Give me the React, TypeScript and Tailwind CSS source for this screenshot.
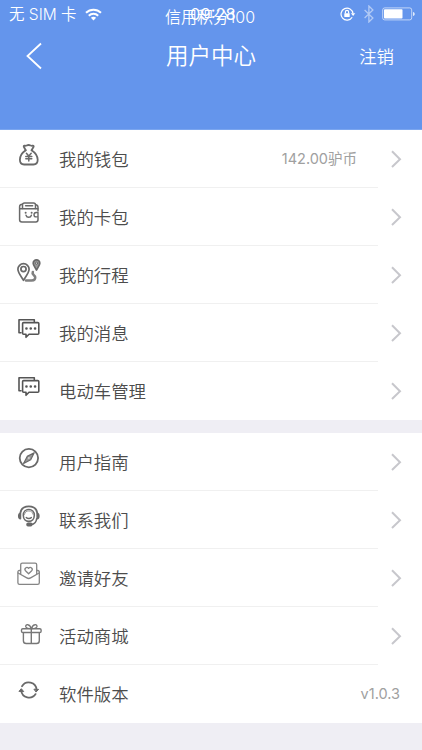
import type { ReactNode } from "react";

type MenuItem = {
  label: string;
  icon: ReactNode;
  value?: string;
  arrow?: boolean;
};

const iconProps = {
  width: 26,
  height: 26,
  viewBox: "0 0 26 26",
  fill: "none",
  stroke: "#696969",
  strokeWidth: 1.8,
  strokeLinecap: "round",
  strokeLinejoin: "round",
} as const;

function WalletIcon() {
  return (
    <svg {...iconProps}>
      <path d="M8.7 7.2 6.8 3.8C6.4 2.8 7.2 2.3 8.2 2.7c1 .4 1.6-.7 3.4-.7s2.6 1.1 3.6.7 1.8.1 1.4 1.1l-2 3.4" />
      <path d="M8.7 7.2C6 9 2.9 12.800 2.900 16.800c0 3.200 1.600 4.700 4.200 4.700h9.400c2.600 0 4.200-1.500 4.200-4.700 0-4-3.400-7.800-6.100-9.600" />
      <path d="m9.400 10.200 2.400 2.800 2.400-2.800M8.800 13.500h6M8.800 15.700h6M11.800 13v5" strokeWidth={1.5} />
    </svg>
  );
}

function CardIcon() {
  return (
    <svg {...iconProps} strokeWidth={1.5}>
      <path d="M21 10V6.500c0-1.600-.8-2.700-2.300-2.700M5.300 3.200c-1.600 0-2.700.9-2.700 2.500v13.100c0 1.400.8 2.200 2.200 2.200h14c1.400 0 2.200-.8 2.200-2.200v-2" />
      <path d="M2.800 7.800h18" />
      <path d="M5.500 7.600V4c0-1.300.7-2 2-2h9c1.300 0 2 .7 2 2v3.600M8.600 4.700h7" />
      <path d="M21 11.500h-1.800a2.200 2.200 0 0 0 0 4.400H21ZM9 14.200c.8 2.700 4.600 2.700 5.400 0" strokeWidth={1.400} />
      <path d="M8.600 11.700h.1M14.600 11.700h.1" strokeWidth={1.900} />
    </svg>
  );
}

function TripIcon() {
  return (
    <svg {...iconProps} strokeWidth={1.7}>
      <path d="M6.500 21.300C4 17.300.9 13.500.9 10.300a5.600 5.600 0 0 1 11.200 0c0 3.200-3.100 7-5.600 11Z" />
      <circle cx="6.500" cy="10.100" r="2.600" />
      <path d="M19.500 11c-1.600-2.800-3.300-4.700-3.300-6.800a3.300 3.300 0 0 1 6.600 0c0 2.100-1.700 4-3.300 6.800Z" fill="#999" />
      <circle cx="19.500" cy="4.200" r="1.100" fill="#ddd" strokeWidth={1} />
      <path d="M9 21.500h5.500c3 0 4.300-1.900 3.500-3.900-.7-1.700-3.300-2.300-2.200-4.600" strokeWidth={2.600} stroke="#808080" />
    </svg>
  );
}

function MessageIcon() {
  return (
    <svg {...iconProps} stroke="#555" strokeWidth={1.600}>
      <path d="M4 15.800H2V2.800h15.300v1.700" />
      <path d="M6.600 5.600h14.200c.6 0 1 .4 1 1v9.700c0 .6-.4 1-1 1H12l-3 3v-3H6.600c-.6 0-1-.4-1-1V6.600c0-.6.4-1 1-1Z" />
      <path d="M9.400 11.500h.1M13.700 11.500h.1M18 11.500h.1" strokeWidth={2.500} />
    </svg>
  );
}

function CompassIcon() {
  return (
    <svg {...iconProps}>
      <circle cx="11.900" cy="12.100" r="9.200" />
      <path d="m17.200 6.700-3.500 7-7.100 3.800 3.600-7.100Z" fill="#999" strokeWidth={1.200} />
      <circle cx="11.900" cy="12" r=".8" fill="#fff" stroke="none" />
    </svg>
  );
}

function SupportIcon() {
  return (
    <svg {...iconProps} strokeWidth={1.500}>
      <path d="M3.300 9C4 4.700 7.400 2.300 11.800 2.300s7.800 2.400 8.500 6.700" strokeWidth={1.800} />
      <path d="M3.500 9.400C2.200 9.400 1.700 10.300 1.700 12s.6 2.700 1.800 2.700ZM20.100 9.400c1.300 0 1.800.9 1.800 2.600s-.6 2.700-1.800 2.700Z" fill="#696969" />
      <path d="M17.300 11.300c0 3.500-2.300 6.100-5.500 6.100s-5.500-2.600-5.500-6.100 2.300-5.800 5.500-5.800 5.500 2.300 5.500 5.800Z" strokeWidth={1.600} />
      <path d="M7.400 10.500c.8-2.700 2-3.500 4.400-3.500s3.600.8 4.400 3.500" strokeWidth={1} stroke="#999" />
      <path d="M9.200 13.500c1.200 1.300 4 1.300 5.200 0" strokeWidth={1.300} />
      <path d="M19.700 14.700c-.5 3.900-2.600 5.700-5.500 5.900" />
      <rect x="10" y="19.300" width="4.800" height="2.500" rx="1" fill="#696969" />
    </svg>
  );
}

function InviteIcon() {
  return (
    <svg {...iconProps} stroke="#858585" strokeWidth={1.300}>
      <path d="M3.700 11.800V2.800c0-1 .6-1.600 1.600-1.600h12.800c1 0 1.600.6 1.600 1.600v9" />
      <path d="M3.500 8.500H2.400c-1 0-1.500.6-1.500 1.500v10.700c0 1 .6 1.700 1.700 1.700h18c1.100 0 1.700-.7 1.700-1.700V10c0-.9-.5-1.500-1.500-1.500h-1.100" />
      <path d="m1.100 11 8.700 4.900c1.300.8 2.500.8 3.800 0l8.500-4.900" />
      <path d="M11.600 11.800 8.500 8.700C6.800 6.700 9.600 4 11.600 6.300c2-2.300 4.800.4 3.100 2.400Z" />
    </svg>
  );
}

function GiftIcon() {
  return (
    <svg {...iconProps} stroke="#777" strokeWidth={1.400}>
      <rect x="4.500" y="8.800" width="19.600" height="3.700" rx="1.300" />
      <path d="M6.400 12.700v8c0 1.900.9 2.800 2.800 2.800h10.300c1.900 0 2.800-.9 2.800-2.800v-8M14.300 8.800v14.500" />
      <path d="M14 8.600c-1.800 0-4.400-.3-5.100-1.600-.6-1.300.5-2.700 2-2.300 1.600.3 2.800 2 3.100 3.900ZM14.700 8.600c1.800 0 4.400-.3 5.100-1.600.6-1.300-.5-2.700-2-2.300-1.600.3-2.800 2-3.100 3.900Z" />
    </svg>
  );
}

function RefreshIcon() {
  return (
    <svg {...iconProps} strokeWidth={1.800}>
      <path d="M5 8.200a7.900 7.900 0 0 1 14.600 3.600M18.600 16.100A7.900 7.900 0 0 1 4.200 12.700" />
      <path d="m17.300 11.200 4.300.2-2.300 2.400ZM2.200 13.100l2.100-2.400 2.200 2.600Z" fill="#696969" strokeWidth={1} />
    </svg>
  );
}

const accountItems: MenuItem[] = [
  { label: "我的钱包", icon: <WalletIcon />, value: "142.00驴币", arrow: true },
  { label: "我的卡包", icon: <CardIcon />, arrow: true },
  { label: "我的行程", icon: <TripIcon />, arrow: true },
  { label: "我的消息", icon: <MessageIcon />, arrow: true },
  { label: "电动车管理", icon: <MessageIcon />, arrow: true },
];

const serviceItems: MenuItem[] = [
  { label: "用户指南", icon: <CompassIcon />, arrow: true },
  { label: "联系我们", icon: <SupportIcon />, arrow: true },
  { label: "邀请好友", icon: <InviteIcon />, arrow: true },
  { label: "活动商城", icon: <GiftIcon />, arrow: true },
  { label: "软件版本", icon: <RefreshIcon />, value: "v1.0.3" },
];

function StatusBar() {
  return (
    <div className="relative flex h-7 items-center justify-between pr-[7px] pl-[9px]">
      <div className="flex items-center gap-2">
        <span className="pt-px text-[15.500px] leading-none whitespace-nowrap">无 SIM 卡</span>
        <svg width="17" height="13" viewBox="0 0 17 13" fill="none" stroke="white" strokeWidth="2">
          <path d="M1 4.700c4.200-4.100 10.800-4.100 15 0" />
          <path d="M3.800 7.700c2.600-2.600 6.800-2.600 9.400 0" />
          <path d="M8.500 12.500 5.900 9.800c1.500-1.300 3.700-1.300 5.200 0Z" fill="white" stroke="none" />
        </svg>
      </div>
      <span className="absolute top-[5px] left-[190px] text-[16.500px] leading-[18px] font-normal">09:28</span>
      <span className="absolute top-[7px] left-[165px] text-[16px] leading-5 whitespace-nowrap">信用积分100</span>
      <div className="flex items-center">
        <svg width="16" height="14" viewBox="0 0 16 14" fill="none" stroke="white" strokeWidth="1.200">
          <path d="M12.200 10.200A6 6 0 1 1 13 6.500" />
          <path d="M10.900 6.300h4.400l-2.200 2.600Z" fill="white" stroke="none" />
          <path d="M5.400 6.500V5a1.600 1.600 0 0 1 3.200 0v1.500" />
          <rect x="4.300" y="6.200" width="5.400" height="3.900" rx=".5" fill="white" stroke="none" />
        </svg>
        <svg className="ml-2 opacity-50" width="10" height="18" viewBox="0 0 10 18" fill="none" stroke="white" strokeWidth="1.300">
          <path d="m.6 5 8.300 8-4 4V1l4 4-8.300 8" />
        </svg>
        <svg className="ml-2" width="33" height="14" viewBox="0 0 33 14" fill="none">
          <rect x=".7" y=".9" width="29" height="12" rx="2" stroke="white" strokeOpacity=".6" />
          <rect x="2" y="2.200" width="18.500" height="9.400" rx=".8" fill="white" />
          <path d="M31 5c2.300.5 2.300 3.500 0 4Z" fill="white" fillOpacity=".8" />
        </svg>
      </div>
    </div>
  );
}

function MenuRow({ item }: { item: MenuItem }) {
  return (
    <li className="group relative flex h-[58px] items-center pl-[17px]">
      <span className="mt-[-6px] w-[42px] shrink-0">{item.icon}</span>
      <span className="flex-1 pt-[2px] text-[17.400px] leading-none text-[#4c4c4c]">{item.label}</span>
      {item.value && (
        <span
          className={`${item.arrow ? "mr-[33px]" : "mr-[22px]"} pt-px text-[14.500px] leading-none font-normal text-[#a0a0a0]`}
        >
          {item.value}
        </span>
      )}
      {item.arrow && (
        <svg className="mr-[20px]" width="12" height="18" viewBox="0 0 12 18" fill="none" stroke="#c7c7cc" strokeWidth="2">
          <path d="m2 1.200 8 8-8 7.800" />
        </svg>
      )}
      <span className="absolute bottom-0 left-0 h-px w-[378px] bg-[#f0f0f0] group-last:hidden" />
    </li>
  );
}

function MenuSection({ items }: { items: MenuItem[] }) {
  return (
    <ul className="bg-white">
      {items.map((item) => (
        <MenuRow key={item.label} item={item} />
      ))}
    </ul>
  );
}

export default function App() {
  return (
    <main className="flex h-[750px] w-[422px] flex-col overflow-hidden bg-[#efeef4] font-[Inter,'Noto_Sans_CJK_SC',sans-serif] font-[350]">
      <header className="h-[130px] shrink-0 border-b border-[#7ba6ef] bg-[#6495ec] text-white">
        <StatusBar />
        <div className="grid h-14 grid-cols-3 items-center">
          <button type="button" aria-label="返回" className="pl-[26px]">
            <svg width="17" height="28" viewBox="0 0 17 28" fill="none" stroke="white" strokeWidth="1.800">
              <path d="M15 1.500 1.500 14 15 26.500" />
            </svg>
          </button>
          <h1 className="pt-px text-center text-[22.500px] leading-none whitespace-nowrap">用户中心</h1>
          <button type="button" className="pt-px pr-[28px] text-right text-[17.400px] leading-none">注销</button>
        </div>
      </header>
      <div className="flex flex-col gap-[13px]">
        <MenuSection items={accountItems} />
        <MenuSection items={serviceItems} />
      </div>
    </main>
  );
}
